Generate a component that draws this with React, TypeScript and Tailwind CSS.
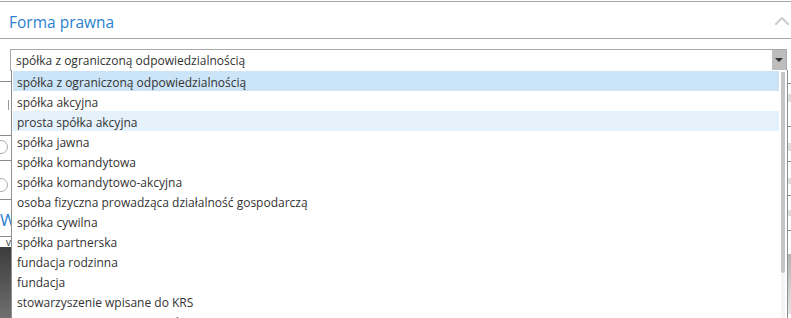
import { ChevronUp } from "lucide-react";

const options = [
  "spółka z ograniczoną odpowiedzialnością",
  "spółka akcyjna",
  "prosta spółka akcyjna",
  "spółka jawna",
  "spółka komandytowa",
  "spółka komandytowo-akcyjna",
  "osoba fizyczna prowadząca działalność gospodarczą",
  "spółka cywilna",
  "spółka partnerska",
  "fundacja rodzinna",
  "fundacja",
  "stowarzyszenie wpisane do KRS",
  "stowarzyszenie niewpisane do KRS",
];

const font = { fontFamily: '"Open Sans", "Noto Sans", sans-serif' };

export default function App() {
  const selected = 0;
  const hovered = 2;

  return (
    <div
      className="relative h-[318px] w-[791px] overflow-hidden bg-white text-[#333]"
      style={font}
    >
      {/* section header */}
      <div className="mt-px flex h-[38px] items-center justify-between border-y border-[#a6a6a6] pl-[9px]">
        <h2 className="translate-y-[3px] text-[15.5px] text-[#2b7fd0]">Forma prawna</h2>
        <ChevronUp className="-mr-[3px] mt-[2px] h-[24px] w-[24px] text-[#cfcfcf]" strokeWidth={2.4} />
      </div>

      {/* select */}
      <div className="ml-[10px] mt-[10px] flex h-[22px] w-[777px] border border-[#a8a8a8]">
        <div className="flex-1 pl-[5px] pt-px text-[12px] leading-[20px]">
          {options[selected]}
        </div>
        <div className="flex w-[14px] items-center justify-center bg-[#bdbdbd]">
          <div className="h-0 w-0 border-x-[4px] border-t-[4px] border-x-transparent border-t-[#333]" />
        </div>
      </div>

      {/* form fields hidden under the list */}
      <div className="flex justify-between">
        <div className="flex w-[300px] flex-col">
          <div className="mt-[10px] border-t border-[#8a8a8a]" />
          <div className="ml-[8px] mt-[18px] h-[10px] w-px bg-[#999]" />
          <div className="mt-[25px] border-t border-[#8a8a8a]" />
          <div className="-ml-[6px] mt-[4px] h-[14px] w-[14px] rounded-full border border-[#aaa]" />
          <div className="mt-[6px] border-t border-[#8a8a8a]" />
          <div className="-ml-[6px] mt-[17px] h-[14px] w-[14px] rounded-full border border-[#aaa]" />
          <div className="mt-[7px] border-t border-[#8a8a8a]" />
          <div className="mt-[10px] text-[17px] leading-[20px] text-[#2b7fd0]">W</div>
          <div className="mt-[6px] border-t border-[#8a8a8a]" />
          <div className="ml-[6px] h-[10px] text-[10px] leading-[10px] text-[#333]">v</div>
          <div className="h-[80px] bg-gradient-to-b from-[#3c3c3c] to-[#777]" />
        </div>
        <div className="flex w-[300px] flex-col items-end">
          <div className="mt-[12px] w-full border-t border-[#8a8a8a]" />
          <div className="mt-[10px] h-[8px] w-[4px] bg-[#ddd]" />
          <div className="mt-[24px] w-full border-t border-[#8a8a8a]" />
          <div className="mt-[16px] h-[8px] w-[4px] bg-[#ddd]" />
          <div className="mt-[10px] w-full border-t border-[#8a8a8a]" />
          <div className="mt-[16px] h-[6px] w-[4px] bg-[#ddd]" />
          <div className="mt-[11px] w-full border-t border-[#8a8a8a]" />
          <div className="mt-[14px] h-[6px] w-[4px] bg-[#ddd]" />
          <div className="mt-[14px] w-full border-t border-[#8a8a8a]" />
          <div className="mt-[23px] h-[60px] w-full bg-gradient-to-b from-[#b4b4b4] to-[#e4e4e4]" />
        </div>
      </div>

      {/* open dropdown list */}
      <div className="absolute left-[11px] top-[70px] flex h-[260px] w-[777px] border-x border-[#8f8f8f] bg-white">
        <ul className="flex-1 pt-px pl-px text-[12px]">
          {options.map((o, i) => (
            <li
              key={o}
              className={`h-[20px] pl-[4px] leading-[24px] ${
                i === selected ? "bg-[#cce4f7]" : i === hovered ? "bg-[#e5f1fb]" : ""
              }`}
            >
              {o}
            </li>
          ))}
        </ul>
        <div className="ml-[2px] mr-[2px] mt-[2px] w-[4px] bg-[#f4f4f4]">
          <div className="h-[201px] rounded-b-sm bg-[#c6c6c6]" />
        </div>
      </div>
    </div>
  );
}
